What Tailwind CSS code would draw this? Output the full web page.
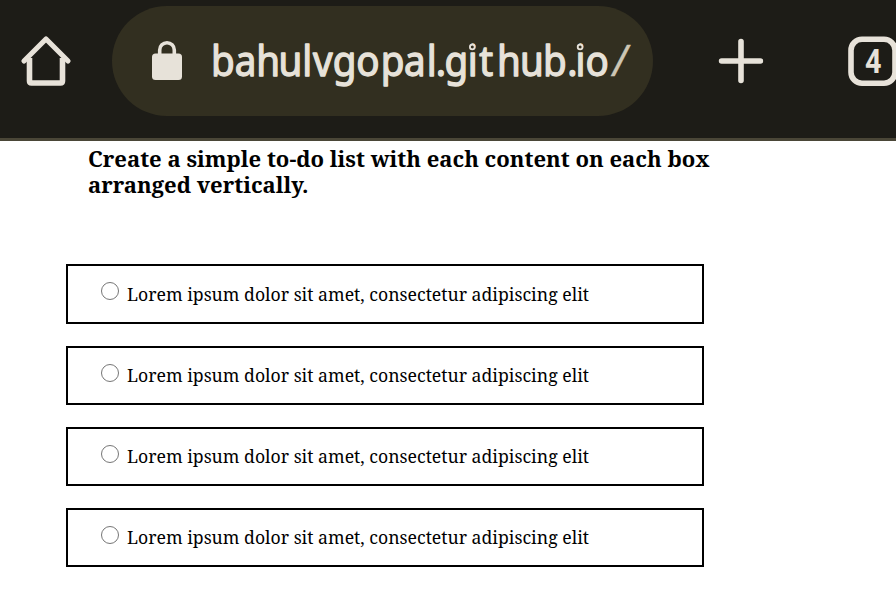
<!DOCTYPE html>
<html lang="en">
<head>
<meta charset="utf-8">
<title>To-do list</title>
<script src="https://cdn.jsdelivr.net/npm/@tailwindcss/browser@4"></script>
</head>
<body class="w-[896px] h-[600px] overflow-hidden bg-white text-black font-['Noto_Serif','Droid_Serif','DejaVu_Serif',serif]">
<header class="flex items-start h-[141px] bg-[#1d1c17] border-b-[3px] border-[#4a4637] text-[#e7e2d9] overflow-hidden">
  <svg class="shrink-0 w-[52px] h-[54px] mt-[34px] ml-5" viewBox="20 34 52 54" fill="none" stroke="currentColor" stroke-width="5.6" stroke-linecap="round" stroke-linejoin="round">
    <path d="M24 61 46 39 68 61" stroke-width="5.2"/><path d="M29.5 58V81Q29.5 83 31.5 83H60.5Q62.5 83 62.5 81V58" stroke-linecap="butt"/>
  </svg>
  <div class="shrink-0 flex items-start w-[541px] h-[110px] ml-10 mt-[6px] rounded-[55px] bg-[#322f20]">
    <svg class="shrink-0 w-[32px] h-[42px] ml-[39px] mt-[33px]" viewBox="151 39 32 42" fill="none">
      <path d="M159.7 56V50a7.3 7.3 0 0 1 14.6 0v6" stroke="currentColor" stroke-width="3.6"/><rect x="152" y="53.5" width="30" height="26.5" rx="3.5" fill="currentColor"/>
    </svg>
    <svg class="shrink-0 w-[430px] h-[74px] ml-[25px] mt-[24px]" viewBox="208 30 430 74" fill="currentColor" stroke="currentColor" stroke-width="1.3" stroke-linejoin="round" font-family="Noto Sans, Open Sans, sans-serif" font-size="41">
      <text transform="scale(.94 1)" y="76" x="224.4 249.7 272.5 296.3 321.5 333 354 379 405 429.8 454 463.6 473 497.5 509.8 528.6 553.2 577.6 603.5 612.2 622.8">bahulvgopal.github.io<tspan x="652" font-style="italic" font-weight="400" font-size="43" stroke-width=".4" fill="#cdc6b4" stroke="#cdc6b4">/</tspan></text>
      <g fill="#322f20" stroke-width="1.8"><circle cx="472.3" cy="47" r="2.4"/><circle cx="580.1" cy="47" r="2.4"/></g>
    </svg>
  </div>
  <svg class="shrink-0 w-[46px] h-[46px] mt-[38px] ml-[65px]" viewBox="718 38 46 46" stroke="currentColor" stroke-width="5.6" stroke-linecap="round"><path d="M741 41.5V80.5M721.6 61H760.4"/></svg>
  <svg class="shrink-0 w-[50px] h-[52px] mt-[35px] ml-[83px]" viewBox="847 35 50 52">
    <rect x="851" y="39.2" width="44" height="44" rx="11" fill="none" stroke="currentColor" stroke-width="5.6"/>
    <text x="865" y="73" fill="currentColor" font-family="Roboto, sans-serif" font-weight="700" font-size="34" textLength="16.5" lengthAdjust="spacingAndGlyphs">4</text>
  </svg>
</header>
<main>
  <h1 class="ml-[86px] h-[123px]">
    <svg class="block w-[640px] h-[65px]" viewBox="86 141 640 65" font-size="22" font-weight="700">
      <text><tspan x="88" y="167" textLength="621.5" lengthAdjust="spacingAndGlyphs">Create a simple to-do list with each content on each box</tspan> <tspan x="88" y="193" textLength="220.5" lengthAdjust="spacingAndGlyphs">arranged vertically.</tspan></text>
    </svg>
  </h1>
  <ul class="flex flex-col gap-[22px] ml-[66px] mt-[0.4px] w-[638px]">
    <li class="h-[59.2px] border-2 border-black flex items-start"><span class="w-[18px] h-[18px] ml-[33px] mt-[16px] rounded-full border border-[#767676]"></span><svg class="w-[480px] h-[40px] ml-[6px] mt-[8px]" viewBox="0 0 480 40" font-size="18"><text x="2" y="26.5" textLength="462" lengthAdjust="spacingAndGlyphs">Lorem ipsum dolor sit amet, consectetur adipiscing elit</text></svg></li>
    <li class="h-[59.2px] border-2 border-black flex items-start"><span class="w-[18px] h-[18px] ml-[33px] mt-[16px] rounded-full border border-[#767676]"></span><svg class="w-[480px] h-[40px] ml-[6px] mt-[7.4px]" viewBox="0 0 480 40" font-size="18"><text x="2" y="27" textLength="462" lengthAdjust="spacingAndGlyphs">Lorem ipsum dolor sit amet, consectetur adipiscing elit</text></svg></li>
    <li class="h-[59.2px] border-2 border-black flex items-start"><span class="w-[18px] h-[18px] ml-[33px] mt-[16px] rounded-full border border-[#767676]"></span><svg class="w-[480px] h-[40px] ml-[6px] mt-[7.2px]" viewBox="0 0 480 40" font-size="18"><text x="2" y="27" textLength="462" lengthAdjust="spacingAndGlyphs">Lorem ipsum dolor sit amet, consectetur adipiscing elit</text></svg></li>
    <li class="h-[59.2px] border-2 border-black flex items-start"><span class="w-[18px] h-[18px] ml-[33px] mt-[16.5px] rounded-full border border-[#767676]"></span><svg class="w-[480px] h-[40px] ml-[6px] mt-[7px]" viewBox="0 0 480 40" font-size="18"><text x="2" y="27" textLength="462" lengthAdjust="spacingAndGlyphs">Lorem ipsum dolor sit amet, consectetur adipiscing elit</text></svg></li>
  </ul>
</main>
</body>
</html>
